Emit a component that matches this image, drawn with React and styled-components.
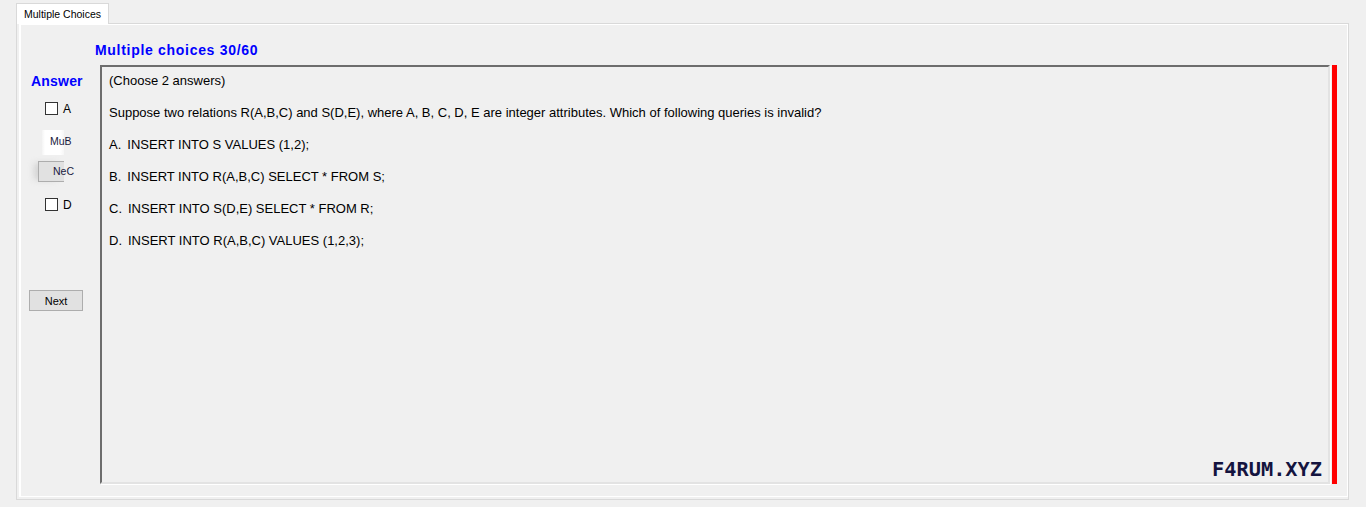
import React from 'react';
import styled, { createGlobalStyle } from 'styled-components';

const GlobalStyle = createGlobalStyle`
  html, body {
    margin: 0;
    padding: 0;
    background: #f0f0f0;
    font-family: "Liberation Sans", Arial, sans-serif;
    color: #000;
  }
`;

const Window = styled.div`
  width: 1366px;
  height: 507px;
  padding: 3px 0 0 16px;
  box-sizing: border-box;
`;

const TabStrip = styled.div`
  display: flex;
`;

const Tab = styled.div`
  position: relative;
  z-index: 1;
  width: 93px;
  height: 21px;
  margin-bottom: -1px;
  box-sizing: border-box;
  border: 1px solid #d9d9d9;
  border-bottom: none;
  background: #fff;
  padding: 4px 0 0 7px;
  font-size: 10.5px;
  line-height: 13px;
  white-space: nowrap;
`;

const Panel = styled.div`
  width: 1333px;
  height: 477px;
  box-sizing: border-box;
  border: 1px solid #d9d9d9;
`;

const Inner = styled.div`
  height: 473px;
  margin-left: 2px;
  box-sizing: border-box;
  border: 1px solid #fff;
  border-left-width: 2px;
  display: flex;
  flex-direction: column;
`;

const Title = styled.div`
  padding: 17px 0 0 74px;
  height: 16px;
  margin-bottom: 7px;
  font-size: 14px;
  font-weight: bold;
  letter-spacing: 0.7px;
  line-height: 16px;
  color: #0000ff;
`;

const Body = styled.div`
  display: flex;
  flex: 1;
  padding-bottom: 12px;
`;

const LeftCol = styled.div`
  width: 79px;
  display: flex;
  flex-direction: column;
`;

const AnswerLabel = styled.div`
  margin: 8px 0 0 10px;
  font-size: 14px;
  font-weight: bold;
  letter-spacing: 0.2px;
  line-height: 16px;
  color: #0000ff;
`;

const CheckRow = styled.label`
  display: flex;
  align-items: center;
  gap: 5px;
  height: 13px;
  margin: ${(p) => p.top}px 0 0 24px;
  font-size: 12px;
`;

const Box = styled.span`
  width: 13px;
  height: 13px;
  box-sizing: border-box;
  border: 1px solid #333;
  background: #fff;
`;

const TextStub = styled.div`
  width: 22px;
  height: 25px;
  margin: 15px 0 0 21px;
  box-sizing: border-box;
  background: linear-gradient(90deg, #f4f4f4 0, #fff 3px, #fff 18px, #f6f6f6 22px);
  padding: 5px 0 0 8px;
  font-size: 10.5px;
  line-height: 13px;
  white-space: nowrap;
  overflow: visible;
  color: #1a1a40;
`;

const StubButton = styled.div`
  width: 26px;
  height: 21px;
  margin: 6px 0 0 17px;
  box-sizing: border-box;
  border: 1px solid #adadad;
  border-right: none;
  background: #e1e1e1;
  box-shadow: -6px 0 6px -2px rgba(200, 200, 200, 0.7);
  padding: 3px 0 0 14px;
  font-size: 10.5px;
  line-height: 13px;
  white-space: nowrap;
  color: #1a1a40;
`;

const Button = styled.button`
  width: 54px;
  height: 21px;
  margin: 79px 0 0 8px;
  padding: 0;
  box-sizing: border-box;
  border: 1px solid #adadad;
  background: #e1e1e1;
  font-family: "Liberation Sans", Arial, sans-serif;
  font-size: 11px;
  color: #000;
`;

const QuestionBox = styled.div`
  position: relative;
  width: 1230px;
  box-sizing: border-box;
  border-style: solid;
  border-width: 2px;
  border-color: #6d6d6d #e3e3e3 #e3e3e3 #6d6d6d;
  box-shadow: 1px 1px 0 #fff;
  padding: 7px 0 0 7px;
  display: flex;
  flex-direction: column;
  gap: 18px;
`;

const Line = styled.div`
  font-size: 13px;
  line-height: 14px;
  white-space: nowrap;
`;

const Option = styled(Line)`
  display: flex;
  gap: 6px;
`;

const Watermark = styled.div`
  position: absolute;
  right: 6px;
  bottom: 1px;
  font-family: "DejaVu Sans Mono", monospace;
  font-weight: bold;
  font-size: 20.3px;
  line-height: 24px;
  color: #14143f;
`;

const RedBar = styled.div`
  width: 5px;
  margin-left: 2px;
  background: #ff0000;
`;

const options = [
  ['A.', 'INSERT INTO S VALUES (1,2);'],
  ['B.', 'INSERT INTO R(A,B,C) SELECT * FROM S;'],
  ['C.', 'INSERT INTO S(D,E) SELECT * FROM R;'],
  ['D.', 'INSERT INTO R(A,B,C) VALUES (1,2,3);'],
];

const App = () => {
  return (
    <>
      <GlobalStyle />
      <Window>
        <TabStrip>
          <Tab>Multiple Choices</Tab>
        </TabStrip>
        <Panel>
          <Inner>
            <Title>Multiple choices 30/60</Title>
            <Body>
              <LeftCol>
                <AnswerLabel>Answer</AnswerLabel>
                <CheckRow top={13}>
                  <Box />A
                </CheckRow>
                <TextStub>MuB</TextStub>
                <StubButton>NeC</StubButton>
                <CheckRow top={16}>
                  <Box />D
                </CheckRow>
                <Button>Next</Button>
              </LeftCol>
              <QuestionBox>
                <Line>(Choose 2 answers)</Line>
                <Line>
                  Suppose two relations R(A,B,C) and S(D,E), where A, B, C, D, E are integer
                  attributes. Which of following queries is invalid?
                </Line>
                {options.map(([key, text]) => (
                  <Option key={key}>
                    <span>{key}</span>
                    <span>{text}</span>
                  </Option>
                ))}
                <Watermark>F4RUM.XYZ</Watermark>
              </QuestionBox>
              <RedBar />
            </Body>
          </Inner>
        </Panel>
      </Window>
    </>
  );
};

export default App;
